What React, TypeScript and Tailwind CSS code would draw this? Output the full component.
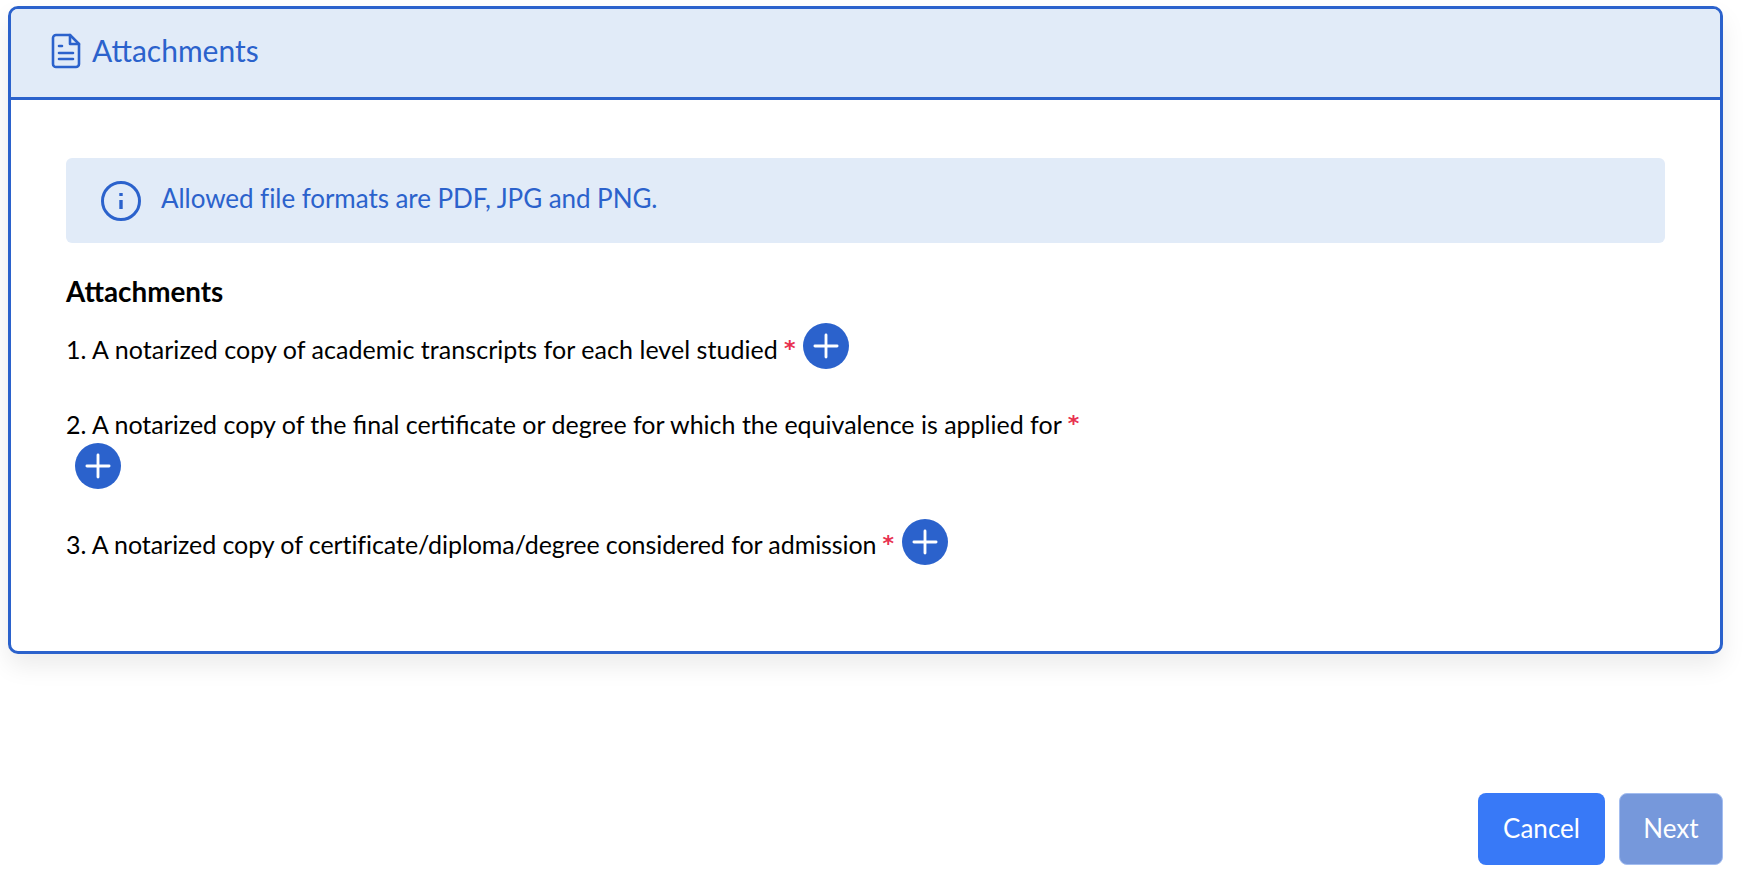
import { Plus } from 'lucide-react';

const font = { fontFamily: 'Lato, sans-serif' };

function AddButton({ className = '' }: { className?: string }) {
  return (
    <button className={`flex w-[46px] h-[46px] shrink-0 rounded-full bg-[#2b62cc] items-center justify-center text-white ${className}`}>
      <Plus size={38} strokeWidth={1.8} />
    </button>
  );
}

function Required() {
  return <span className="text-[#e8314f] text-[22px] font-bold relative top-[-3px] ml-[6px] font-['DejaVu_Sans',sans-serif]">*</span>;
}

export default function App() {
  return (
    <div className="w-[1746px] h-[886px] bg-white overflow-hidden flex flex-col" style={font}>
      {/* Card */}
      <div className="mt-[6px] ml-[8px] w-[1715px] h-[648px] border-[3px] border-[#2b62cc] rounded-[10px] overflow-hidden bg-white shadow-[0_12px_24px_rgba(0,0,0,0.08)] shrink-0 flex flex-col">
        <div className="h-[91px] shrink-0 bg-[#e1ebf8] border-b-[3px] border-[#2b62cc] flex items-center pl-[40px] gap-[11px] text-[#2b62cc]">
          <svg width="30" height="36" viewBox="0 0 30 36" fill="none" stroke="currentColor" strokeWidth="2.6" strokeLinejoin="round" strokeLinecap="round" className="mb-[4px]">
            <path d="M5 2h14l9 9v20a3 3 0 0 1-3 3H5a3 3 0 0 1-3-3V5a3 3 0 0 1 3-3z" />
            <path d="M19 2v9h9" />
            <path d="M8 13h3M8 20h14M8 26h14" />
          </svg>
          <span className="text-[30px] leading-none mb-[6px]">Attachments</span>
        </div>
        <div className="pt-[58px] px-[55px] text-black">
          <div className="h-[85px] bg-[#e1ebf8] rounded-[6px] flex items-center pl-[35px] gap-[20px] text-[#2b62cc]">
            <svg width="40" height="40" viewBox="0 0 40 40" fill="none" stroke="currentColor" className="shrink-0">
              <circle cx="20" cy="20" r="18.5" strokeWidth="3" />
              <path d="M20 19v9" strokeWidth="3.4" />
              <path d="M20 12v3" strokeWidth="3.4" />
            </svg>
            <span className="text-[26px] tracking-[-0.06px] leading-none mb-[6px]">Allowed file formats are PDF, JPG and PNG.</span>
          </div>
          <div className="mt-[33px] text-[27.8px] leading-[32px] font-bold">Attachments</div>
          <div className="mt-[15px] text-[25px] h-[46px] flex items-center">
            <span className="pt-[8px] tracking-[0.05px]">1. A notarized copy of academic transcripts for each level studied<Required /></span>
            <AddButton className="ml-[8px]" />
          </div>
          <div className="mt-[39px] text-[25px] leading-[32px]">
            2. A notarized copy of the final certificate or degree for which the equivalence is applied for
            <Required />
          </div>
          <AddButton className="ml-[9px]" />
          <div className="mt-[30px] text-[25px] h-[46px] flex items-center">
            <span className="pt-[6px] tracking-[-0.07px]">3. A notarized copy of certificate/diploma/degree considered for admission<Required /></span>
            <AddButton className="ml-[8px]" />
          </div>
        </div>
      </div>
      {/* Footer buttons */}
      <div className="mt-[139px] ml-[1478px] flex gap-[14px] text-white text-[26px]">
        <button className="w-[127px] h-[72px] rounded-[8px] bg-[#3879f7] pb-[2px]">Cancel</button>
        <button className="w-[104px] h-[72px] rounded-[8px] bg-[#7698db] border border-[#a3bdf0] pb-[2px]">Next</button>
      </div>
    </div>
  );
}
